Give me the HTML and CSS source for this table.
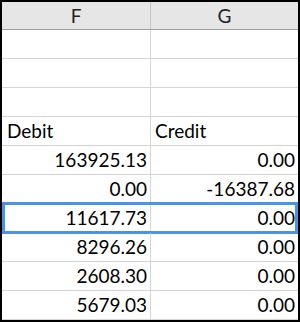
FILE: index.html
```html
<!DOCTYPE html>
<html>
<head>
<meta charset="utf-8">
<link rel="stylesheet" href="styles.css">
</head>
<body>
<div class="sheet">
  <div class="row head">
    <div class="cell col-f">F</div>
    <div class="cell col-g">G</div>
  </div>
  <div class="row"><div class="cell col-f"></div><div class="cell col-g"></div></div>
  <div class="row"><div class="cell col-f"></div><div class="cell col-g"></div></div>
  <div class="row"><div class="cell col-f"></div><div class="cell col-g"></div></div>
  <div class="row"><div class="cell col-f text">Debit</div><div class="cell col-g text">Credit</div></div>
  <div class="row"><div class="cell col-f num">163925.13</div><div class="cell col-g num">0.00</div></div>
  <div class="row"><div class="cell col-f num">0.00</div><div class="cell col-g num">-16387.68</div></div>
  <div class="row selected"><div class="cell col-f num">11617.73</div><div class="cell col-g num">0.00</div></div>
  <div class="row"><div class="cell col-f num">8296.26</div><div class="cell col-g num">0.00</div></div>
  <div class="row"><div class="cell col-f num">2608.30</div><div class="cell col-g num">0.00</div></div>
  <div class="row"><div class="cell col-f num">5679.03</div><div class="cell col-g num">0.00</div></div>
</div>
</body>
</html>
```

FILE: styles.css
```css
html, body {
  margin: 0;
  padding: 0;
  background: #ffffff;
}

.sheet {
  box-sizing: border-box;
  width: 300px;
  height: 322px;
  border: 2px solid #000000;
  background: #ffffff;
  font-family: "Lato", "Open Sans", sans-serif;
  font-size: 19px;
  color: #000000;
  overflow: hidden;
}

.row {
  display: grid;
  grid-template-columns: 149px 147px;
  height: 29px;
  box-sizing: border-box;
  border-bottom: 1px solid #d4d4d4;
  position: relative;
}

.cell {
  box-sizing: border-box;
  height: 28px;
  line-height: 28px;
  white-space: nowrap;
  overflow: hidden;
}

.col-f {
  border-right: 1px solid #d4d4d4;
}

.head {
  height: 28px;
  background: #e6e6e6;
  border-bottom: 1px solid #9e9e9e;
}

.head .cell {
  height: 27px;
  line-height: 27px;
  text-align: center;
  color: #222222;
}

.head .col-f {
  border-right: 1px solid #c4c4c4;
}

.text {
  text-align: left;
  padding-left: 5px;
}

.col-g.text {
  padding-left: 4px;
}

.num {
  text-align: right;
  padding-right: 3px;
}

.selected::after {
  content: "";
  position: absolute;
  left: 0;
  right: 0;
  top: -2px;
  bottom: -2px;
  border: 3px solid #4a93e8;
  pointer-events: none;
}
```
